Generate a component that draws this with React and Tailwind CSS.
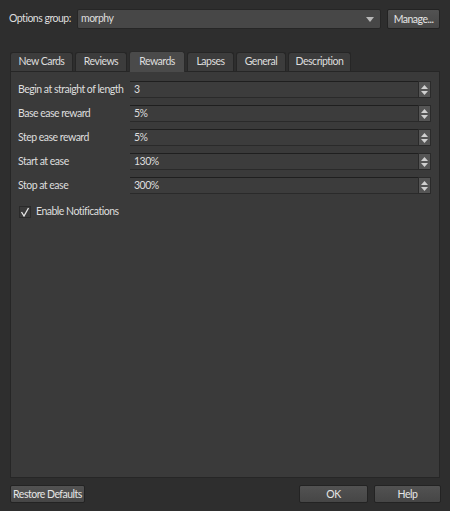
import React from 'react';

const fields = [
  { label: 'Begin at straight of length', value: '3' },
  { label: 'Base ease reward', value: '5%' },
  { label: 'Step ease reward', value: '5%' },
  { label: 'Start at ease', value: '130%' },
  { label: 'Stop at ease', value: '300%' },
];

const tabs = [
  { name: 'New Cards', w: 'w-[63px]' },
  { name: 'Reviews', w: 'w-[52px]' },
  { name: 'Rewards', w: 'w-[56px]' },
  { name: 'Lapses', w: 'w-[47px]' },
  { name: 'General', w: 'w-[50px]' },
  { name: 'Description', w: 'w-[63px]' },
];

function Spin() {
  return (
    <div className="w-[13px] h-[17px] bg-[#555] border border-[#2a2a2a] flex flex-col items-center justify-center gap-[2px]">
      <svg width="7" height="4" viewBox="0 0 7 4"><path d="M3.5 0L7 4H0z" fill="#d0d0d0" /></svg>
      <svg width="7" height="4" viewBox="0 0 7 4"><path d="M0 0h7L3.5 4z" fill="#d0d0d0" /></svg>
    </div>
  );
}

function Btn({ children, className = '' }) {
  return (
    <button className={`h-[18px] whitespace-nowrap rounded-[2px] border border-[#232323] bg-gradient-to-b from-[#525252] to-[#464646] text-[#e6e6e6] leading-none ${className}`}>
      {children}
    </button>
  );
}

export default function App() {
  return (
    <div className="w-[450px] h-[511px] bg-[#2e2e2e] text-[#dedede] text-[10.5px] tracking-[-0.5px] whitespace-nowrap flex flex-col px-[9px] pt-[9px]" style={{ fontFamily: 'Lato, "Liberation Sans", sans-serif' }}>
      {/* top row */}
      <div className="flex items-center h-[20px]">
        <span className="w-[68px] shrink-0">Options group:</span>
        <div className="w-[304px] h-[20px] bg-[#474747] border border-[#262626] rounded-[2px] flex items-center pl-[3px] pr-[6px]">
          <span className="flex-1">morphy</span>
          <svg width="8" height="5" viewBox="0 0 8 5"><path d="M0 0h8L4 5z" fill="#b8b8b8" /></svg>
        </div>
        <Btn className="ml-[6px] w-[53px] h-[20px]">Manage...</Btn>
      </div>

      {/* tabs */}
      <div className="mt-[21px] flex items-end gap-[2px] pl-[1px] h-[21px]">
        {tabs.map((t) => (
          <div
            key={t.name}
            className={
              t.name === 'Rewards'
                ? `${t.w} h-[21px] bg-[#4a4a4a] border border-b-0 border-[#2a2a2a] rounded-t-[3px] flex items-center justify-center mb-[-1px] relative z-10`
                : `${t.w} h-[19px] bg-[#3c3c3c] border border-b-0 border-[#262626] rounded-t-[3px] flex items-center justify-center`
            }
          >
            {t.name}
          </div>
        ))}
      </div>

      {/* panel */}
      <div className="ml-[1px] w-[430px] h-[407px] bg-[#3a3a3a] border border-[#262626] px-[7px] pt-[9px]">
        <div className="flex flex-col gap-[7px]">
          {fields.map((f) => (
            <div key={f.label} className="flex items-center h-[17px]">
              <span className="w-[112px] shrink-0">{f.label}</span>
              <div className="w-[288px] h-[17px] bg-[#3c3c3c] border-t border-[#1f1f1f] border-b border-b-[#2a2a2a] flex items-center pl-[4px]">
                {f.value}
              </div>
              <Spin />
            </div>
          ))}
        </div>
        <div className="flex items-center mt-[10px] ml-[1px]">
          <div className="w-[12px] h-[12px] bg-[#3a3a3a] border border-[#2a2a2a] flex items-center justify-center">
            <svg width="10" height="10" viewBox="0 0 10 10"><path d="M1.5 5L4 9L8.5 1" stroke="#e6e6e6" strokeWidth="1.3" fill="none" /></svg>
          </div>
          <span className="ml-[5px]">Enable Notifications</span>
        </div>
      </div>

      {/* bottom */}
      <div className="mt-[7px] ml-[1px] flex items-center">
        <Btn className="w-[75px]">Restore Defaults</Btn>
        <div className="flex-1" />
        <Btn className="w-[69px] border-[#6a8aa0] from-[#56616a] to-[#4a545c]">OK</Btn>
        <Btn className="ml-[6px] w-[67px]">Help</Btn>
      </div>
    </div>
  );
}
